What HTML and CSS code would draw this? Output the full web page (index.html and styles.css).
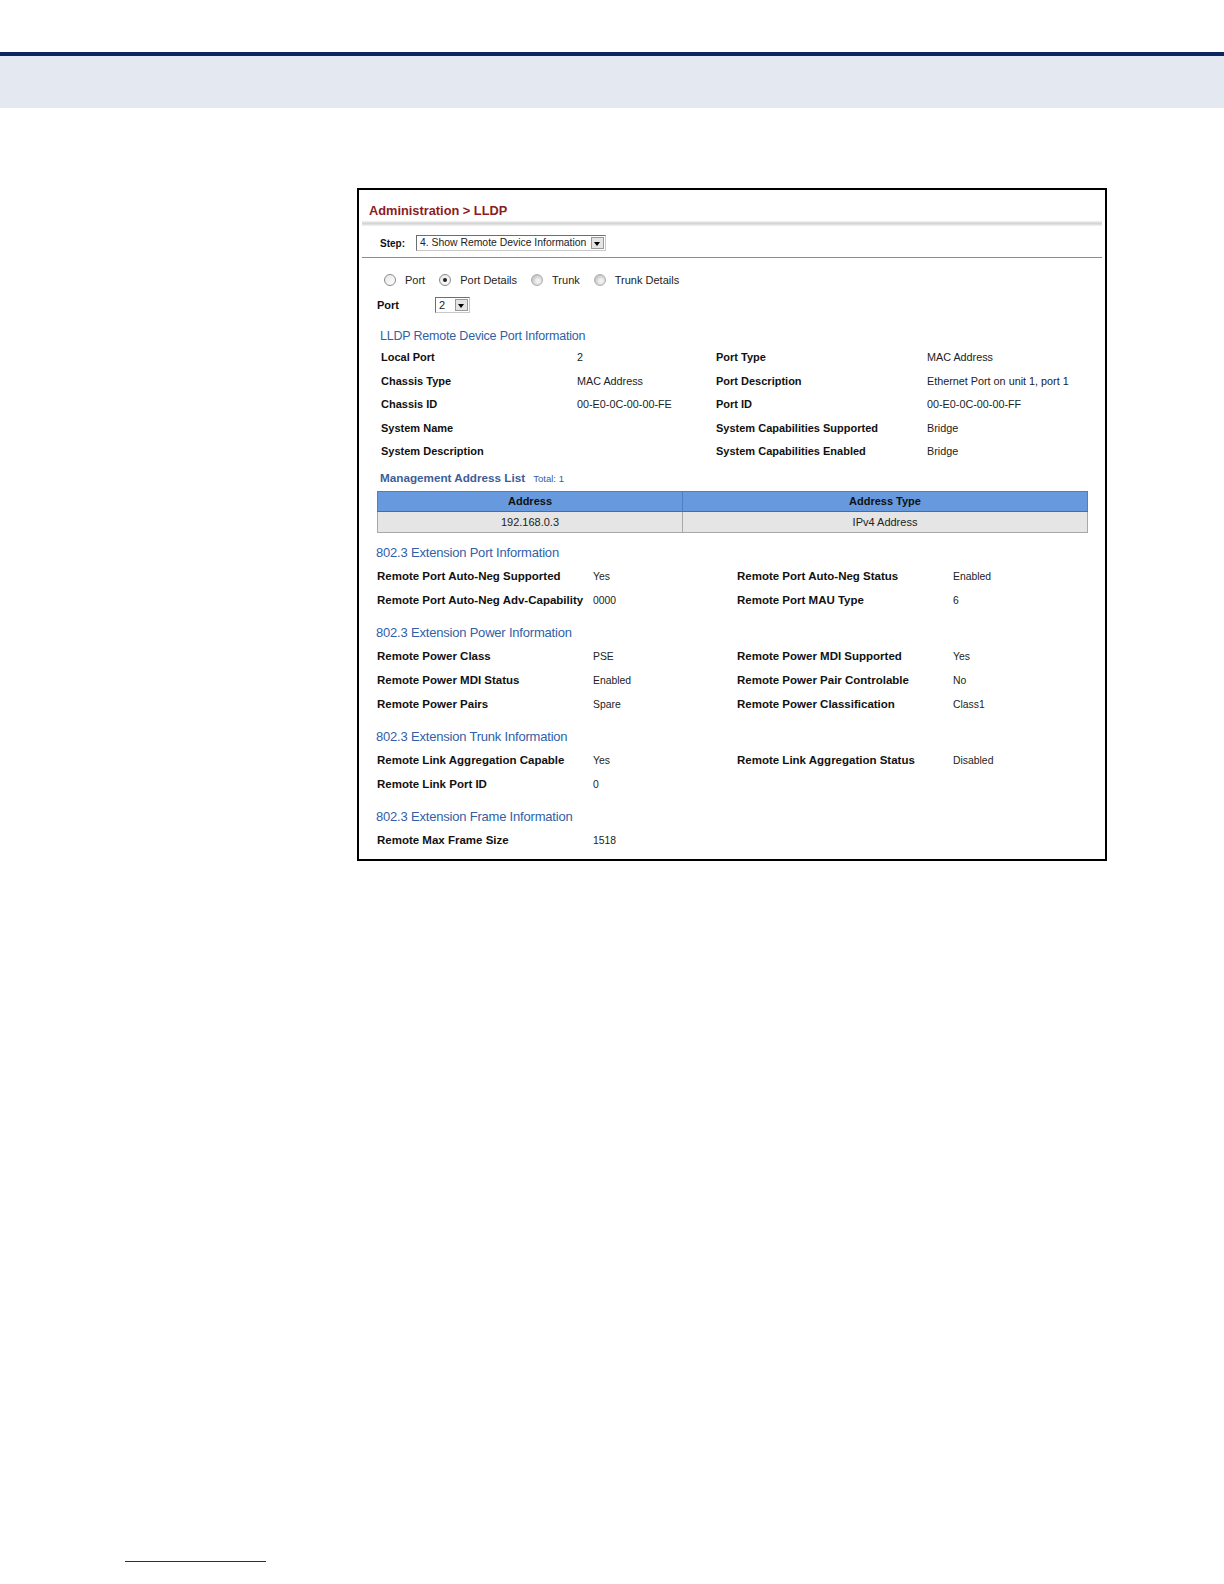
FILE: index.html
```html
<!DOCTYPE html>
<html>
  <head>
    <meta charset="utf-8" />
    <title>Administration > LLDP</title>
    <link rel="stylesheet" href="styles.css">
  </head>
  <body>
    <div class="page-band"></div>

    <div class="panel">
      <div class="panel-title">Administration &gt; LLDP</div>
      <div class="title-shadow"></div>

      <div class="step-row">
        <span class="step-label">Step:</span>
        <span class="select step-select">
          <span class="select-text">4. Show Remote Device Information</span>
          <span class="select-arrow"></span>
        </span>
      </div>

      <div class="radio-row">
        <span class="radio"></span><span class="radio-label">Port</span>
        <span class="radio checked"></span><span class="radio-label">Port Details</span>
        <span class="radio disabled"></span><span class="radio-label">Trunk</span>
        <span class="radio disabled"></span><span class="radio-label">Trunk Details</span>
      </div>

      <div class="port-row">
        <span class="port-label">Port</span>
        <span class="select port-select">
          <span class="select-text">2</span>
          <span class="select-arrow"></span>
        </span>
      </div>

      <div class="section first">
        <div class="section-title">LLDP Remote Device Port Information</div>
        <div class="info-grid remote">
          <span class="label">Local Port</span><span class="value">2</span>
          <span class="label">Port Type</span><span class="value">MAC Address</span>
          <span class="label">Chassis Type</span><span class="value">MAC Address</span>
          <span class="label">Port Description</span><span class="value">Ethernet Port on unit 1, port 1</span>
          <span class="label">Chassis ID</span><span class="value">00-E0-0C-00-00-FE</span>
          <span class="label">Port ID</span><span class="value">00-E0-0C-00-00-FF</span>
          <span class="label">System Name</span><span class="value"></span>
          <span class="label">System Capabilities Supported</span><span class="value">Bridge</span>
          <span class="label">System Description</span><span class="value"></span>
          <span class="label">System Capabilities Enabled</span><span class="value">Bridge</span>
        </div>

        <div class="mgmt-title">Management Address List <span class="total">Total: 1</span></div>
      </div>

      <table class="addr-table">
        <tr><th>Address</th><th>Address Type</th></tr>
        <tr><td>192.168.0.3</td><td>IPv4 Address</td></tr>
      </table>

      <div class="section ext">
        <div class="section-title">802.3 Extension Port Information</div>
        <div class="info-grid">
          <span class="label">Remote Port Auto-Neg Supported</span><span class="value">Yes</span>
          <span class="label">Remote Port Auto-Neg Status</span><span class="value">Enabled</span>
          <span class="label">Remote Port Auto-Neg Adv-Capability</span><span class="value">0000</span>
          <span class="label">Remote Port MAU Type</span><span class="value">6</span>
        </div>

        <div class="section-title">802.3 Extension Power Information</div>
        <div class="info-grid">
          <span class="label">Remote Power Class</span><span class="value">PSE</span>
          <span class="label">Remote Power MDI Supported</span><span class="value">Yes</span>
          <span class="label">Remote Power MDI Status</span><span class="value">Enabled</span>
          <span class="label">Remote Power Pair Controlable</span><span class="value">No</span>
          <span class="label">Remote Power Pairs</span><span class="value">Spare</span>
          <span class="label">Remote Power Classification</span><span class="value">Class1</span>
        </div>

        <div class="section-title">802.3 Extension Trunk Information</div>
        <div class="info-grid">
          <span class="label">Remote Link Aggregation Capable</span><span class="value">Yes</span>
          <span class="label">Remote Link Aggregation Status</span><span class="value">Disabled</span>
          <span class="label">Remote Link Port ID</span><span class="value">0</span>
        </div>

        <div class="section-title">802.3 Extension Frame Information</div>
        <div class="info-grid">
          <span class="label">Remote Max Frame Size</span><span class="value">1518</span>
        </div>
      </div>
    </div>

    <div class="footnote-rule"></div>
  </body>
</html>
```

FILE: styles.css
```css
body {
  margin: 0;
  font-family: "Liberation Sans", Arial, sans-serif;
  color: #111;
  background-color: #fff;
}
.page-band {
  margin-top: 52px;
  height: 52px;
  border-top: 4px solid #0b2462;
  background-color: #e4e8f0;
}

.panel {
  width: 746px;
  margin: 80px 0 0 357px;
  padding: 0 0 7px 0;
  border: 2px solid #000;
  font-size: 11px;
}
.panel-title {
  padding: 12px 0 0 10px;
  line-height: 18px;
  font-size: 12.8px;
  font-weight: bold;
  color: #8b1c24;
}
.title-shadow {
  margin: 1px 3px 0 3px;
  height: 5px;
  background: linear-gradient(#f2f2f2, #d4d4d4 50%, #f4f4f4);
}

.step-row {
  display: flex;
  align-items: center;
  margin: 0 3px;
  padding: 9px 0 6px 18px;
  border-bottom: 1px solid #8c8c8c;
}
.step-label {
  width: 36px;
  font-size: 10px;
  font-weight: bold;
}
.select {
  display: inline-flex;
  align-items: stretch;
  height: 14px;
  border: 1px solid #6e6e6e;
  border-right-color: #c8c8c8;
  border-bottom-color: #c8c8c8;
  background-color: #fff;
}
.select-text {
  flex: 1;
  padding-left: 3px;
  line-height: 14px;
  font-size: 10.4px;
  color: #222;
}
.select-arrow {
  position: relative;
  width: 13px;
  margin: 1px;
  background-color: #e4e4e4;
  border: 1px solid #999;
  box-sizing: border-box;
}
.select-arrow::after {
  content: "";
  position: absolute;
  left: 2px;
  top: 4px;
  border-left: 3.5px solid transparent;
  border-right: 3.5px solid transparent;
  border-top: 4px solid #000;
}
.step-select {
  width: 188px;
}
.port-select {
  width: 33px;
}
.port-select .select-text {
  font-size: 11px;
}

.radio-row {
  display: flex;
  align-items: center;
  margin-top: 15px;
  padding-left: 25px;
  line-height: 14px;
  font-size: 11px;
  color: #222;
}
.radio {
  position: relative;
  width: 10px;
  height: 10px;
  border: 1px solid #8a8a8a;
  border-radius: 50%;
  background: linear-gradient(135deg, #e6e6e6, #fff);
}
.radio.checked::after {
  content: "";
  position: absolute;
  left: 3px;
  top: 3px;
  width: 4px;
  height: 4px;
  border-radius: 50%;
  background-color: #222;
}
.radio.disabled {
  border-color: #b0b0b0;
  background: radial-gradient(circle at 60% 60%, #f0f0f0 20%, #c4c4c4 70%);
}
.radio-label {
  margin: 0 14px 0 9px;
}

.port-row {
  display: flex;
  align-items: center;
  margin-top: 9px;
  padding-left: 18px;
  height: 18px;
}
.port-label {
  width: 58px;
  font-weight: bold;
}

.section {
  margin: 0 3px;
}
.section.first {
  padding-left: 18px;
}
.section.ext {
  padding-left: 14px;
}
.section-title {
  margin-top: 13px;
  line-height: 16px;
  font-size: 13px;
  color: #2f5fa8;
  letter-spacing: -0.2px;
}
.section.ext .section-title:first-child {
  margin-top: 12px;
}
.section.first .section-title {
  margin-top: 14px;
  font-size: 12.5px;
}
.mgmt-title {
  margin-top: 6px;
  line-height: 16px;
  font-size: 11.7px;
  font-weight: bold;
  color: #3d5e97;
}
.total {
  margin-left: 5px;
  font-size: 9.5px;
  font-weight: normal;
  color: #2f5fa8;
}

.info-grid {
  display: grid;
  grid-template-columns: 216px 144px 216px 1fr;
  grid-auto-rows: 24px;
  line-height: 24px;
  margin-top: 3px;
  padding-left: 1px;
}
.info-grid .label {
  font-size: 11.5px;
}
.info-grid .value {
  padding-top: 1px;
  font-size: 10.4px;
}
.info-grid.remote {
  grid-template-columns: 196px 139px 211px 1fr;
  grid-auto-rows: 23.5px;
  line-height: 23.5px;
  margin-top: 2px;
}
.info-grid.remote .label {
  font-size: 11px;
}
.info-grid.remote .value {
  padding-top: 0;
  font-size: 10.8px;
}
.label {
  font-weight: bold;
  color: #111;
}
.value {
  color: #222;
}

.addr-table {
  width: 711px;
  margin: 4px 0 0 18px;
  border-collapse: collapse;
  border: 1px solid #a8a8a8;
  font-size: 11px;
  text-align: center;
}
.addr-table th {
  height: 19px;
  padding: 0;
  background-color: #6699dd;
  border: 1px solid #4d7fc4;
  border-bottom-color: #3b6fb8;
  color: #111;
}
.addr-table td {
  height: 20px;
  padding: 0;
  background-color: #e5e5e5;
  border-right: 1px solid #a8a8a8;
  color: #222;
}
.addr-table th:first-child,
.addr-table td:first-child {
  width: 304px;
}

.footnote-rule {
  width: 141px;
  margin: 700px 0 0 125px;
  border-top: 1px solid #1d2c6b;
}
```
